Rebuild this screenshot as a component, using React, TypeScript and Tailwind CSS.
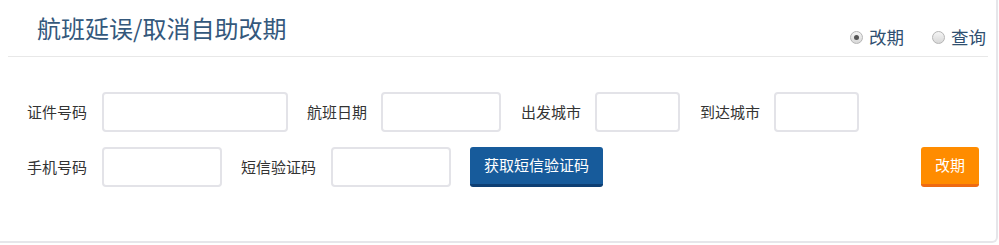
import React from 'react';

const font = { fontFamily: '"Microsoft YaHei", "Noto Sans CJK SC", sans-serif' };

const Field: React.FC<{ label: string; width: string; gap?: string }> = ({ label, width, gap = 'ml-[15px]' }) => (
  <div className="flex items-center">
    <span className="text-[15px] text-[#333]">{label}</span>
    <input className={`${gap} ${width} h-[40px] rounded-[4px] border-2 border-[#e3e3e8] bg-white outline-none`} />
  </div>
);

const Radio: React.FC<{ label: string; checked?: boolean }> = ({ label, checked }) => (
  <label className="flex items-center gap-[6px]">
    <span className="flex h-[13px] w-[13px] items-center justify-center rounded-full border border-[#b5b5b5] bg-gradient-to-b from-[#f5f5f5] to-[#d8d8d8]">
      {checked && <span className="h-[5px] w-[5px] rounded-full bg-[#555]" />}
    </span>
    <span className="text-[17.5px] text-[#2f4f70]">{label}</span>
  </label>
);

export default function App() {
  return (
    <div className="h-[245px] w-[999px] bg-white" style={font}>
      <div className="h-[243px] w-[998px] rounded-br-[6px] border-r-2 border-b-2 border-[#e6e6ea] bg-white">
        <div className="mx-[8px] flex h-[57px] items-start justify-between border-b border-[#e8e8e8] pr-[2px]">
          <h1 className="ml-[29px] mt-[12px] text-[24px] leading-[32px] text-[#34587c]">航班延误/取消自助改期</h1>
          <div className="mt-[24px] flex items-center gap-[28px]">
            <Radio label="改期" checked />
            <Radio label="查询" />
          </div>
        </div>

        <div className="mt-[35px] flex items-center pl-[27px]">
          <Field label="证件号码" width="w-[186px]" />
          <div className="ml-[19px]"><Field label="航班日期" width="w-[120px]" gap="ml-[14px]" /></div>
          <div className="ml-[20px]"><Field label="出发城市" width="w-[85px]" gap="ml-[14px]" /></div>
          <div className="ml-[20px]"><Field label="到达城市" width="w-[85px]" gap="ml-[14px]" /></div>
        </div>

        <div className="mt-[15px] flex items-center pl-[27px] pr-[17px]">
          <Field label="手机号码" width="w-[120px]" />
          <div className="ml-[19px]"><Field label="短信验证码" width="w-[120px]" gap="ml-[15px]" /></div>
          <button className="ml-[19px] h-[40px] w-[133px] rounded-[3px] border-b-[3px] border-[#0e3f73] bg-[#175b9b] text-[15px] text-white">
            获取短信验证码
          </button>
          <button className="ml-auto h-[40px] w-[58px] rounded-[3px] border-b-[3px] border-[#ee6a12] bg-[#ff8c00] text-[15px] text-white">
            改期
          </button>
        </div>
      </div>
    </div>
  );
}
